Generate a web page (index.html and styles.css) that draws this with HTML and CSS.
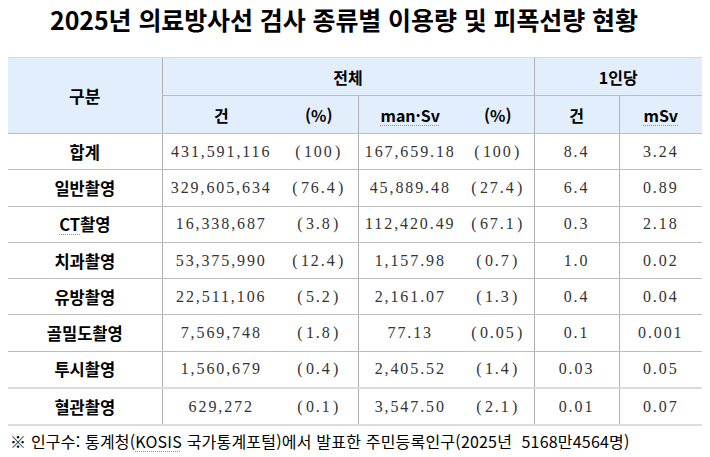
FILE: index.html
```html
<!DOCTYPE html>
<html lang="ko">
<head>
<meta charset="utf-8">
<title>2025년 의료방사선 검사 종류별 이용량 및 피폭선량 현황</title>
<link rel="stylesheet" href="styles.css">
</head>
<body>
<div class="page">
  <h1 class="title">2025년 의료방사선 검사 종류별 이용량 및 피폭선량 현황</h1>
  <table class="stats">
    <colgroup>
      <col class="c-label">
      <col class="c-cnt">
      <col class="c-pct">
      <col class="c-dose">
      <col class="c-pct2">
      <col class="c-per1">
      <col class="c-per2">
    </colgroup>
    <thead>
      <tr class="h1">
        <th rowspan="2" class="lab">구분</th>
        <th colspan="4" class="sep">전체</th>
        <th colspan="2" class="sep">1인당</th>
      </tr>
      <tr class="h2">
        <th class="sep">건</th>
        <th>(%)</th>
        <th class="sep"><span class="sq">man·Sv</span></th>
        <th>(%)</th>
        <th class="sep">건</th>
        <th class="sep"><span class="sq">mSv</span></th>
      </tr>
    </thead>
    <tbody>
      <tr><th class="lab">합계</th><td class="sep">431,591,116</td><td class="p"><span class="op">(</span>100<span class="cp">)</span></td><td class="sep">167,659.18</td><td class="p"><span class="op">(</span>100<span class="cp">)</span></td><td class="sep">8.4</td><td class="sep">3.24</td></tr>
      <tr><th class="lab">일반촬영</th><td class="sep">329,605,634</td><td class="p"><span class="op">(</span>76.4<span class="cp">)</span></td><td class="sep">45,889.48</td><td class="p"><span class="op">(</span>27.4<span class="cp">)</span></td><td class="sep">6.4</td><td class="sep">0.89</td></tr>
      <tr><th class="lab"><span class="sq">CT</span>촬영</th><td class="sep">16,338,687</td><td class="p"><span class="op">(</span>3.8<span class="cp">)</span></td><td class="sep">112,420.49</td><td class="p"><span class="op">(</span>67.1<span class="cp">)</span></td><td class="sep">0.3</td><td class="sep">2.18</td></tr>
      <tr><th class="lab">치과촬영</th><td class="sep">53,375,990</td><td class="p"><span class="op">(</span>12.4<span class="cp">)</span></td><td class="sep">1,157.98</td><td class="p"><span class="op">(</span>0.7<span class="cp">)</span></td><td class="sep">1.0</td><td class="sep">0.02</td></tr>
      <tr><th class="lab">유방촬영</th><td class="sep">22,511,106</td><td class="p"><span class="op">(</span>5.2<span class="cp">)</span></td><td class="sep">2,161.07</td><td class="p"><span class="op">(</span>1.3<span class="cp">)</span></td><td class="sep">0.4</td><td class="sep">0.04</td></tr>
      <tr><th class="lab">골밀도촬영</th><td class="sep">7,569,748</td><td class="p"><span class="op">(</span>1.8<span class="cp">)</span></td><td class="sep">77.13</td><td class="p"><span class="op">(</span>0.05<span class="cp">)</span></td><td class="sep">0.1</td><td class="sep">0.001</td></tr>
      <tr><th class="lab">투시촬영</th><td class="sep">1,560,679</td><td class="p"><span class="op">(</span>0.4<span class="cp">)</span></td><td class="sep">2,405.52</td><td class="p"><span class="op">(</span>1.4<span class="cp">)</span></td><td class="sep">0.03</td><td class="sep">0.05</td></tr>
      <tr class="last"><th class="lab">혈관촬영</th><td class="sep">629,272</td><td class="p"><span class="op">(</span>0.1<span class="cp">)</span></td><td class="sep">3,547.50</td><td class="p"><span class="op">(</span>2.1<span class="cp">)</span></td><td class="sep">0.01</td><td class="sep">0.07</td></tr>
    </tbody>
  </table>
  <p class="note">※ 인구수: 통계청(<span class="sq">KOSIS</span> 국가통계포털)에서 발표한 주민등록인구(2025년&nbsp; 5168만4564명)</p>
</div>
</body>
</html>
```

FILE: styles.css
```css
html, body {
  margin: 0;
  padding: 0;
  background: #ffffff;
}

.page {
  width: 710px;
  height: 457px;
  overflow: hidden;
  font-family: "Noto Sans CJK KR", "Noto Sans", sans-serif;
  color: #000;
}

.title {
  margin: 0;
  height: 57px;
  padding: 0 0 18px 50px;
  box-sizing: border-box;
  display: flex;
  align-items: center;
  font-size: 25px;
  font-weight: 700;
  letter-spacing: -0.1px;
  line-height: 1;
}

.stats {
  margin-left: 8px;
  width: 694px;
  border-collapse: collapse;
  table-layout: fixed;
}

.c-label { width: 154px; }
.c-cnt { width: 118px; }
.c-pct { width: 78px; }
.c-dose { width: 104px; }
.c-pct2 { width: 72px; }
.c-per1 { width: 85px; }
.c-per2 { width: 83px; }

.stats th,
.stats td {
  padding: 0;
  text-align: center;
  vertical-align: middle;
  border-top: 1px solid #bdbdbd;
  border-bottom: 1px solid #bdbdbd;
}

.stats .sep {
  border-left: 1px solid #b0b0b0;
}

.stats thead th {
  background: #e3eefc;
  font-weight: 700;
  font-size: 16px;
  height: 37px;
}

.stats thead .h1 th {
  border-top: 1px solid #dadada;
}

.stats thead .lab {
  font-size: 17px;
}

.stats tbody th.lab {
  font-weight: 700;
  font-size: 16.5px;
  height: 35.3px;
}

.stats tbody td {
  font-family: "Liberation Serif", "Noto Sans CJK KR", serif;
  font-size: 16px;
  color: #333;
  letter-spacing: 1.9px;
}

.op {
  margin-right: 1.5px;
}

.cp {
  margin-left: 1.5px;
}

.stats tbody tr.last th,
.stats tbody tr.last td {
  border-top: 2px solid #dcdcdc;
  border-bottom: 2px solid #dcdcdc;
}

.sq {
  text-decoration: underline dotted #e4774f;
  text-decoration-thickness: 1px;
  text-underline-offset: 3px;
}

.note {
  margin: 4px 0 0 10px;
  font-size: 16px;
  line-height: 22px;
  letter-spacing: 0.2px;
  color: #000;
}
```
